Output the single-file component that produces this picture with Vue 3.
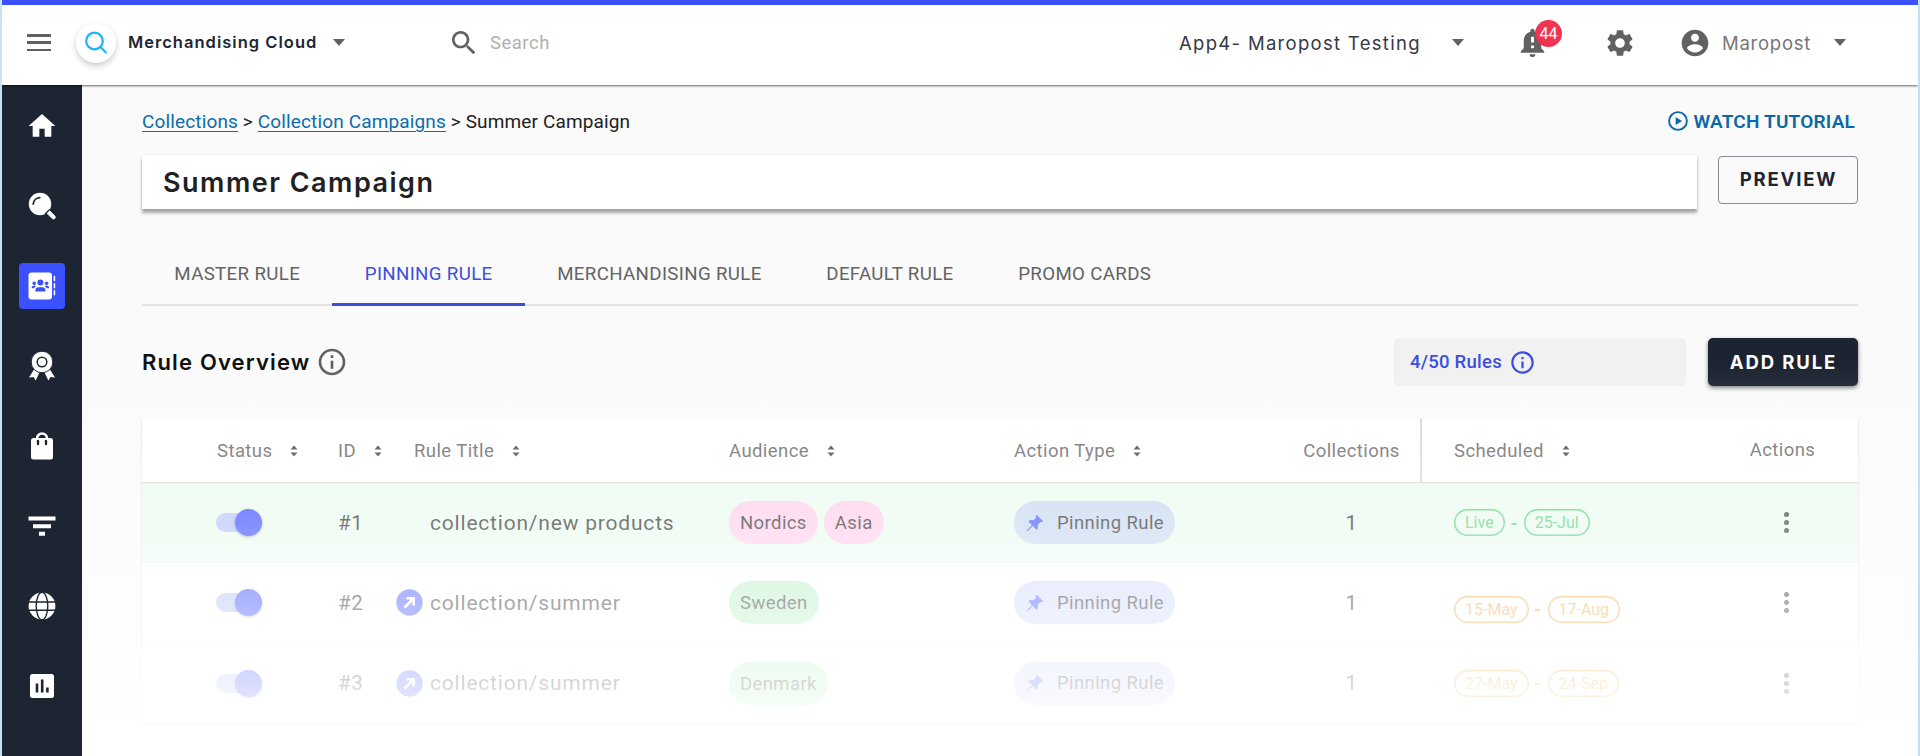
<template>
  <div class="app">
    <header class="topbar">
      <button class="menu-btn" aria-label="Menu"><span></span><span></span><span></span></button>
      <div class="logo">
        <svg viewBox="0 0 24 24" width="24" height="24" fill="none" stroke="#1fb4f5" stroke-width="2.2">
          <circle cx="10.5" cy="10" r="8.3" /><path d="M16.5 16l6 6" />
        </svg>
      </div>
      <div class="product">Merchandising Cloud</div>
      <i class="caret"></i>
      <svg class="search-icon" viewBox="0 0 24 24" width="32" height="32"><path :d="icons.search" /></svg>
      <div class="search-text">Search</div>

      <div class="account-name">App4- Maropost Testing</div>
      <i class="caret caret-account"></i>
      <div class="bell">
        <svg viewBox="0 0 24 24" width="35" height="35"><path :d="icons.bell" /></svg>
        <span class="badge">44</span>
      </div>
      <svg class="gear" viewBox="0 0 24 24" width="32" height="32"><path :d="icons.gear" /></svg>
      <svg class="avatar" viewBox="0 0 24 24" width="32" height="32"><path :d="icons.account" /></svg>
      <div class="user-name">Maropost</div>
      <i class="caret caret-user"></i>
    </header>

    <div class="body">
      <nav class="sidebar">
        <a class="nav-item"><svg viewBox="0 0 24 24" width="32" height="32"><path d="M10 20v-6h4v6h5v-8h3L12 3 2 12h3v8z" /></svg></a>
        <a class="nav-item">
          <svg viewBox="0 0 28 28" width="28" height="28">
            <circle cx="12" cy="12" r="11.2" />
            <path d="M5.2 12a7 7 0 0 1 6.5-6.3" fill="none" stroke="#1e2532" stroke-width="1.8" stroke-linecap="round" />
            <path d="M18.8 21l1.8-1.8 1-.6 5.2 5.2a1.9 1.9 0 0 1-2.7 2.7l-5-5z" stroke="#fff" stroke-width=".6" />
            <path d="M21.6 17.4l-4.6 4.8" stroke="#1e2532" stroke-width="1.3" />
          </svg>
        </a>
        <a class="nav-item active">
          <svg viewBox="0 0 28 28" width="28" height="28">
            <rect x="0.5" y="0.5" width="23.5" height="27" rx="3" />
            <path d="M26.4 4.5v4M26.4 11.8v4M26.4 18.8v4" stroke="#fff" stroke-width="1.6" stroke-linecap="round" />
            <g fill="#3b50f5">
              <circle cx="12.4" cy="10.6" r="3" />
              <circle cx="6.2" cy="11.2" r="1.8" /><circle cx="18.6" cy="11.2" r="1.8" />
              <path d="M7.4 19.4v-1.2a3 3 0 0 1 3-3h4a3 3 0 0 1 3 3v1.2z" />
              <path d="M3.6 16.2c0-1.8 1-2.6 2.6-2.6.8 0 1.4.2 1.8.6-1 .6-1.5 1.2-1.8 2zM21.2 16.2c0-1.8-1-2.6-2.6-2.6-.8 0-1.4.2-1.8.6 1 .6 1.5 1.2 1.8 2z" />
            </g>
          </svg>
        </a>
        <a class="nav-item">
          <svg viewBox="0 0 28 30" width="28" height="30">
            <path d="M6.2 18.2L1 26.4l4.6-.4 2 3.4 4.4-8.6zM21.8 18.2l5.2 8.2-4.6-.4-2 3.4-4.4-8.6z" />
            <circle cx="14" cy="11" r="10.8" stroke="#1e2532" stroke-width="1" />
            <circle cx="14" cy="11" r="4.8" fill="none" stroke="#1e2532" stroke-width="1.5" />
          </svg>
        </a>
        <a class="nav-item">
          <svg viewBox="0 0 24 28" width="24" height="28">
            <path d="M7 6.5a5 5 0 0 1 10 0" fill="none" stroke="#fff" stroke-width="2.6" />
            <rect x="1" y="6" width="22" height="21.5" rx="2.5" />
            <path d="M8 9v3M16 9v3" stroke="#1e2532" stroke-width="2.4" stroke-linecap="round" />
          </svg>
        </a>
        <a class="nav-item"><svg viewBox="0 0 28 20" width="28" height="20"><path d="M.5.5h27v4H.5zM5 8.2h18v4H5zM11 15.8h6v4h-6z" /></svg></a>
        <a class="nav-item">
          <svg viewBox="0 0 28 28" width="28" height="28">
            <circle cx="14" cy="14" r="13.4" />
            <g fill="none" stroke="#1e2532" stroke-width="1.4">
              <ellipse cx="14" cy="14" rx="5.8" ry="13.8" /><path d="M0 10h28M0 18.2h28" />
            </g>
          </svg>
        </a>
        <a class="nav-item">
          <svg viewBox="0 0 24 24" width="24" height="24">
            <rect width="24" height="24" rx="2.5" />
            <path d="M7 9.5v9M12.2 5.5v13M17.4 13.5v5" stroke="#1e2532" stroke-width="2.6" />
          </svg>
        </a>
      </nav>

      <main class="content">
        <div class="crumb-row">
          <div class="crumbs"><a>Collections</a> &gt; <a>Collection Campaigns</a> &gt; Summer Campaign</div>
          <a class="tutorial">
            <svg viewBox="0 0 20 20" width="20" height="20">
              <circle cx="10" cy="10" r="8.9" fill="none" stroke="currentColor" stroke-width="1.9" />
              <path d="M7.7 5.9l6.3 4.1-6.3 4.1z" fill="currentColor" />
            </svg>
            <span>WATCH TUTORIAL</span>
          </a>
        </div>

        <div class="title-row">
          <div class="title-box"><span>Summer Campaign</span></div>
          <button class="preview-btn">PREVIEW</button>
        </div>

        <div class="tabs">
          <div v-for="tab in tabs" :key="tab" class="tab" :class="{ selected: tab === activeTab }" @click="activeTab = tab">{{ tab }}</div>
        </div>

        <div class="overview-row">
          <h2>Rule Overview</h2>
          <svg class="info" viewBox="0 0 24 24" width="32" height="32"><path :d="icons.info" /></svg>
          <div class="rule-count">
            <span>4/50 Rules</span>
            <svg viewBox="0 0 24 24" width="27" height="27"><path :d="icons.info" /></svg>
          </div>
          <button class="add-btn">ADD RULE</button>
        </div>

        <div class="table">
          <div class="row head">
            <div v-for="col in columns" :key="col.key" class="cell" :class="col.key">
              <span>{{ col.label }}</span>
              <svg v-if="col.sortable" class="sort" viewBox="0 0 8 12" width="8" height="12"><path d="M.5 4.5L4 .5l3.5 4zM.5 7.5L4 11.5l3.5-4z" /></svg>
            </div>
          </div>
          <div v-for="rule in rules" :key="rule.id" class="row" :class="{ live: rule.live }">
            <div class="cell status"><span class="toggle"></span></div>
            <div class="cell id">#{{ rule.id }}</div>
            <div class="cell title">
              <span class="link-slot">
                <svg v-if="rule.linked" viewBox="0 0 27 27" width="27" height="27">
                  <circle cx="13.5" cy="13.5" r="13.2" fill="#3b50ff" />
                  <path d="M8.5 18.5l8-8M10.5 9.3h7.2v7.2" fill="none" stroke="#fff" stroke-width="2.6" />
                </svg>
              </span>
              <span>{{ rule.title }}</span>
            </div>
            <div class="cell audience">
              <span v-for="name in rule.audience" :key="name" class="chip" :class="rule.live ? 'pink' : 'green'">{{ name }}</span>
            </div>
            <div class="cell action">
              <span class="chip pin">
                <svg viewBox="0 0 18 18" width="18" height="18"><path d="M10.7.8l6.5 6.4-1.5 1-1.1-.3-2.8 2.8.2 3.5-1.6 1.5-3.6-3.6L2 16.8l-1.2.4.4-1.3 4.7-4.7L2.400 7.600 4 6.100l3.500.2 2.700-2.800-.4-1.200z" /></svg>
                Pinning Rule
              </span>
            </div>
            <div class="cell collections">{{ rule.collections }}</div>
            <div class="cell scheduled" :class="[rule.live ? 'sched-live' : 'sched-next', { low: rule.id === 2 }]">
              <span class="date">{{ rule.from }}</span><b class="dash">-</b><span class="date">{{ rule.to }}</span>
            </div>
            <div class="cell actions"><span class="dots"><i></i><i></i><i></i></span></div>
          </div>
        </div>
        <div class="fade"></div>
      </main>
    </div>
  </div>
</template>

<script setup>
import { ref } from 'vue';

const tabs = ['MASTER RULE', 'PINNING RULE', 'MERCHANDISING RULE', 'DEFAULT RULE', 'PROMO CARDS'];
const activeTab = ref('PINNING RULE');

const columns = [
  { key: 'status', label: 'Status', sortable: true },
  { key: 'id', label: 'ID', sortable: true },
  { key: 'title', label: 'Rule Title', sortable: true },
  { key: 'audience', label: 'Audience', sortable: true },
  { key: 'action', label: 'Action Type', sortable: true },
  { key: 'collections', label: 'Collections' },
  { key: 'scheduled', label: 'Scheduled', sortable: true },
  { key: 'actions', label: 'Actions' },
];

const rules = [
  { id: 1, title: 'collection/new products', live: true, linked: false, audience: ['Nordics', 'Asia'], collections: 1, from: 'Live', to: '25-Jul' },
  { id: 2, title: 'collection/summer', live: false, linked: true, audience: ['Sweden'], collections: 1, from: '15-May', to: '17-Aug' },
  { id: 3, title: 'collection/summer', live: false, linked: true, audience: ['Denmark'], collections: 1, from: '27-May', to: '24-Sep' },
];

const icons = {
  search: 'M15.5 14h-.79l-.28-.27C15.41 12.59 16 11.11 16 9.5 16 5.91 13.09 3 9.5 3S3 5.91 3 9.5 5.91 16 9.5 16c1.61 0 3.09-.59 4.23-1.57l.27.28v.79l5 4.99L20.49 19l-4.99-5zm-6 0C7.01 14 5 11.99 5 9.5S7.01 5 9.5 5 14 7.01 14 9.5 11.99 14 9.5 14z',
  bell: 'M12 22c1.1 0 2-.9 2-2h-4c0 1.1.89 2 2 2zm6-6v-5c0-3.07-1.64-5.64-4.5-6.32V4c0-.83-.67-1.5-1.5-1.5s-1.5.67-1.5 1.5v.68C7.63 5.36 6 7.92 6 11v5l-2 2v1h16v-1l-2-2zm-5 0h-2v-2h2v2zm0-4h-2V8h2v4z',
  gear: 'M19.14 12.94c.04-.3.06-.61.06-.94 0-.32-.02-.64-.07-.94l2.03-1.58c.18-.14.23-.41.12-.61l-1.92-3.32c-.12-.22-.37-.29-.59-.22l-2.39.96c-.5-.38-1.03-.7-1.62-.94l-.36-2.54c-.04-.24-.24-.41-.48-.41h-3.84c-.24 0-.43.17-.47.41l-.36 2.54c-.59.24-1.13.57-1.62.94l-2.39-.96c-.22-.08-.47 0-.59.22L2.74 8.87c-.12.21-.08.47.12.61l2.03 1.58c-.05.3-.09.63-.09.94s.02.64.07.94l-2.03 1.58c-.18.14-.23.41-.12.61l1.92 3.32c.12.22.37.29.59.22l2.39-.96c.5.38 1.03.7 1.62.94l.36 2.54c.05.24.24.41.48.41h3.84c.24 0 .44-.17.47-.41l.36-2.54c.59-.24 1.13-.56 1.62-.94l2.39.96c.22.08.47 0 .59-.22l1.92-3.32c.12-.22.07-.47-.12-.61l-2.01-1.58zM12 15.6c-1.98 0-3.6-1.62-3.6-3.6s1.62-3.6 3.6-3.6 3.6 1.62 3.6 3.6-1.62 3.6-3.6 3.6z',
  account: 'M12 2C6.48 2 2 6.48 2 12s4.48 10 10 10 10-4.48 10-10S17.52 2 12 2zm0 3c1.66 0 3 1.34 3 3s-1.34 3-3 3-3-1.34-3-3 1.34-3 3-3zm0 14.2c-2.5 0-4.71-1.28-6-3.22.03-1.99 4-3.08 6-3.08 1.99 0 5.97 1.09 6 3.08-1.29 1.94-3.5 3.22-6 3.22z',
  info: 'M11 7h2v2h-2zm0 4h2v6h-2zm1-9C6.48 2 2 6.48 2 12s4.48 10 10 10 10-4.48 10-10S17.52 2 12 2zm0 18c-4.41 0-8-3.59-8-8s3.59-8 8-8 8 3.59 8 8-3.59 8-8 8z',
};
</script>

<style>
body {
  background: #fff;
  overflow: hidden;
}
</style>

<style scoped>
.app {
  box-sizing: border-box;
  width: 1920px;
  height: 756px;
  border-left: 2px solid #c9e0f5;
  border-right: 2px solid #c3dff5;
  display: flex;
  flex-direction: column;
  overflow: hidden;
  font-family: Roboto, "Liberation Sans", sans-serif;
  color: #212121;
  white-space: nowrap;
}

.app * {
  box-sizing: border-box;
}

svg {
  display: block;
  flex: none;
}

button {
  font: inherit;
  padding: 0;
}

.topbar {
  height: 85px;
  flex: none;
  border-top: 5px solid #3b50ff;
  background: #fff;
  box-shadow: 0 1px 2px rgba(0, 0, 0, 0.6);
  display: flex;
  align-items: center;
  padding: 0 72px 5px 25px;
  z-index: 2;
  fill: #616161;
}

.menu-btn {
  width: 24px;
  height: 17px;
  border: none;
  background: none;
  display: flex;
  flex-direction: column;
  justify-content: space-between;
}

.menu-btn span {
  width: 24px;
  height: 2.5px;
  background: #616161;
}

.logo {
  width: 40px;
  height: 40px;
  margin-left: 25px;
  border-radius: 50%;
  background: #fff;
  box-shadow: 0 3px 6px rgba(0, 0, 0, 0.2);
  display: flex;
  align-items: center;
  justify-content: center;
}

.product {
  width: 205px;
  margin-left: 12px;
  padding-bottom: 2px;
  font-family: Inter, sans-serif;
  font-weight: 600;
  font-size: 16.5px;
  letter-spacing: 1.02px;
  color: #1e2532;
}

.caret {
  width: 12px;
  height: 7px;
  background: #616161;
  clip-path: polygon(0 0, 100% 0, 50% 100%);
}

.search-icon {
  margin-left: 103px;
}

.search-text {
  margin-left: 10px;
  font-size: 18.5px;
  letter-spacing: 0.5px;
  color: #b0b0b0;
}

.account-name {
  width: 242px;
  margin-left: auto;
  font-family: Inter, sans-serif;
  font-size: 18.5px;
  letter-spacing: 1.3px;
  color: #333a45;
}

.caret-account {
  margin-left: 31px;
}

.bell {
  position: relative;
  margin-left: 51px;
}

.badge {
  position: absolute;
  left: 20px;
  top: -5px;
  width: 27px;
  height: 27px;
  border-radius: 50%;
  background: #ef3452;
  color: #fff;
  font-size: 16px;
  line-height: 27px;
  text-align: center;
}

.gear {
  margin-left: 54px;
}

.avatar {
  margin-left: 43px;
}

.user-name {
  width: 91px;
  margin-left: 11px;
  font-family: Inter, sans-serif;
  font-size: 18.5px;
  letter-spacing: 0.75px;
  color: #777;
}

.caret-user {
  margin-left: 21px;
}

.body {
  flex: 1;
  display: flex;
  min-height: 0;
}

.sidebar {
  width: 80px;
  flex: none;
  background: #1e2532;
  fill: #fff;
  display: flex;
  flex-direction: column;
  align-items: center;
  padding-top: 18px;
  gap: 34px;
}

.nav-item {
  width: 46px;
  height: 46px;
  border-radius: 4px;
  display: flex;
  align-items: center;
  justify-content: center;
}

.nav-item.active {
  background: #3b50ff;
}

.content {
  position: relative;
  flex: 1;
  background: #fafafa;
  padding: 22px 60px 0 60px;
}

.crumb-row {
  height: 28px;
  display: flex;
  align-items: center;
  justify-content: space-between;
}

.crumbs {
  font-size: 19px;
  letter-spacing: 0.14px;
}

.crumbs a {
  color: #0d6cab;
  text-decoration: underline;
  text-underline-offset: 3px;
  text-decoration-thickness: 1px;
}

.tutorial {
  display: flex;
  align-items: center;
  gap: 6px;
  padding-right: 3px;
  color: #0a68a8;
  font-size: 19px;
  font-weight: 600;
  letter-spacing: 0.2px;
}

.title-row {
  display: flex;
  align-items: flex-start;
  justify-content: space-between;
  margin-top: 20px;
}

.title-box {
  width: 1555px;
  height: 54px;
  background: #fff;
  box-shadow: 0 4px 3px rgba(0, 0, 0, 0.33), 0 0 2px rgba(0, 0, 0, 0.1);
  padding-left: 21px;
  font-family: Inter, sans-serif;
  font-size: 27px;
  font-weight: 600;
  letter-spacing: 1.5px;
  line-height: 55px;
}

.preview-btn {
  width: 140px;
  height: 48px;
  margin-top: 1px;
  padding: 0 0 2px 1px;
  border: 1px solid #8a8d92;
  border-radius: 4px;
  background: transparent;
  color: #1e2532;
  font-family: Inter, sans-serif;
  font-size: 18.5px;
  font-weight: 700;
  letter-spacing: 1.8px;
}

.tabs {
  display: flex;
  height: 61px;
  margin-top: 36px;
  border-bottom: 2px solid #e4e4e4;
}

.tab {
  padding: 0 32.3px;
  height: 61px;
  line-height: 58px;
  font-size: 18.7px;
  letter-spacing: 0.35px;
  color: #636363;
}

.tab.selected {
  color: #3b4fe0;
  border-bottom: 3px solid #3b4fdc;
}

.overview-row {
  display: flex;
  align-items: center;
  height: 50px;
  margin-top: 31px;
}

h2 {
  margin: 0;
  width: 174px;
  font-family: Inter, sans-serif;
  font-size: 22px;
  font-weight: 600;
  letter-spacing: 1.15px;
  color: #111;
}

.info {
  fill: #616161;
}

.rule-count {
  width: 292px;
  height: 48px;
  margin-left: auto;
  padding-left: 16px;
  border-radius: 4px;
  background: #f1f1f1;
  display: flex;
  align-items: center;
  gap: 7px;
  color: #3b4fe0;
  fill: #3b4fe0;
  font-size: 18.5px;
  font-weight: 500;
  letter-spacing: 0.25px;
}

.add-btn {
  width: 150px;
  height: 48px;
  margin-left: 22px;
  padding: 0 0 1px 1px;
  border: none;
  border-radius: 5px;
  background: #1c2431;
  box-shadow: 0 2px 4px rgba(0, 0, 0, 0.5);
  color: #fff;
  font-family: Inter, sans-serif;
  font-size: 18.5px;
  font-weight: 700;
  letter-spacing: 1.9px;
}

.table {
  margin-top: 32px;
  background: #fff;
  box-shadow: 0 1px 2px rgba(0, 0, 0, 0.2);
}

.row {
  display: grid;
  grid-template-columns: 196px 58px 333px 285px 267px 141px 293px 1fr;
  height: 80px;
  border-bottom: 1px solid #ededed;
  font-size: 20.5px;
  letter-spacing: 0.6px;
  color: #1d1d1d;
}

.row:last-child {
  border-bottom: none;
}

.row.head {
  height: 64px;
  border-bottom-color: #cfd8d2;
  font-size: 18.5px;
  letter-spacing: 0.42px;
  color: #666;
}

.row.live {
  background: #e8faee;
}

.cell {
  display: flex;
  align-items: center;
  min-width: 0;
}

.sort {
  margin-left: 18px;
  fill: #444;
}

.status {
  padding-left: 74px;
}

.head .status {
  padding-left: 75px;
}

.title {
  font-size: 21px;
  letter-spacing: 0.8px;
}

.head .title {
  padding-left: 18px;
  font-size: 18.5px;
  letter-spacing: 0.42px;
}

.link-slot {
  width: 27px;
  margin-right: 7px;
}

.audience {
  gap: 6px;
}

.head .audience {
  gap: 0;
}

.collections,
.actions {
  justify-content: center;
}

.head .collections {
  border-right: 2px solid #d6d6d6;
  padding-left: 2px;
}

.scheduled {
  padding-left: 32px;
}

.head .actions {
  padding: 0 8px 2px 0;
}

.toggle {
  position: relative;
  width: 44px;
  height: 19px;
  border-radius: 10px;
  background: #b3bffc;
}

.toggle::after {
  content: '';
  position: absolute;
  right: -2px;
  top: -4px;
  width: 27px;
  height: 27px;
  border-radius: 50%;
  background: #3044ff;
  box-shadow: 0 1px 3px rgba(0, 0, 0, 0.4);
}

.chip {
  height: 43px;
  padding: 0 11px;
  border-radius: 22px;
  font-size: 18.5px;
  letter-spacing: 0.4px;
  line-height: 44px;
}

.chip.pink {
  background: #ffcbea;
}

.chip.green {
  background: #b4efc1;
}

.chip.pin {
  display: flex;
  align-items: center;
  gap: 13px;
  padding-left: 12px;
  background: #cfd7fa;
  fill: #3b50ff;
}

.live .chip.pin {
  background: #c3d5f0;
}

.sched-live {
  color: #4fcf70;
}

.sched-next {
  color: #efa636;
}

.low {
  padding-top: 13px;
}

.date {
  height: 27px;
  padding: 0 11px;
  border-radius: 14px;
  box-shadow: inset 0 0 0 1.5px currentColor;
  font-size: 16px;
  letter-spacing: 0;
  line-height: 28px;
}

.dash {
  width: 19px;
  font-weight: 500;
  font-size: 20px;
  text-align: center;
}

.dots {
  display: flex;
  flex-direction: column;
  gap: 3px;
}

.dots i {
  width: 5px;
  height: 5px;
  border-radius: 50%;
  background: #333;
}

/* washes the lower part of the list out to white */
.fade {
  position: absolute;
  left: 0;
  right: 0;
  top: 280px;
  bottom: 0;
  background: linear-gradient(rgba(255, 255, 255, 0), #fff);
  pointer-events: none;
}
</style>
